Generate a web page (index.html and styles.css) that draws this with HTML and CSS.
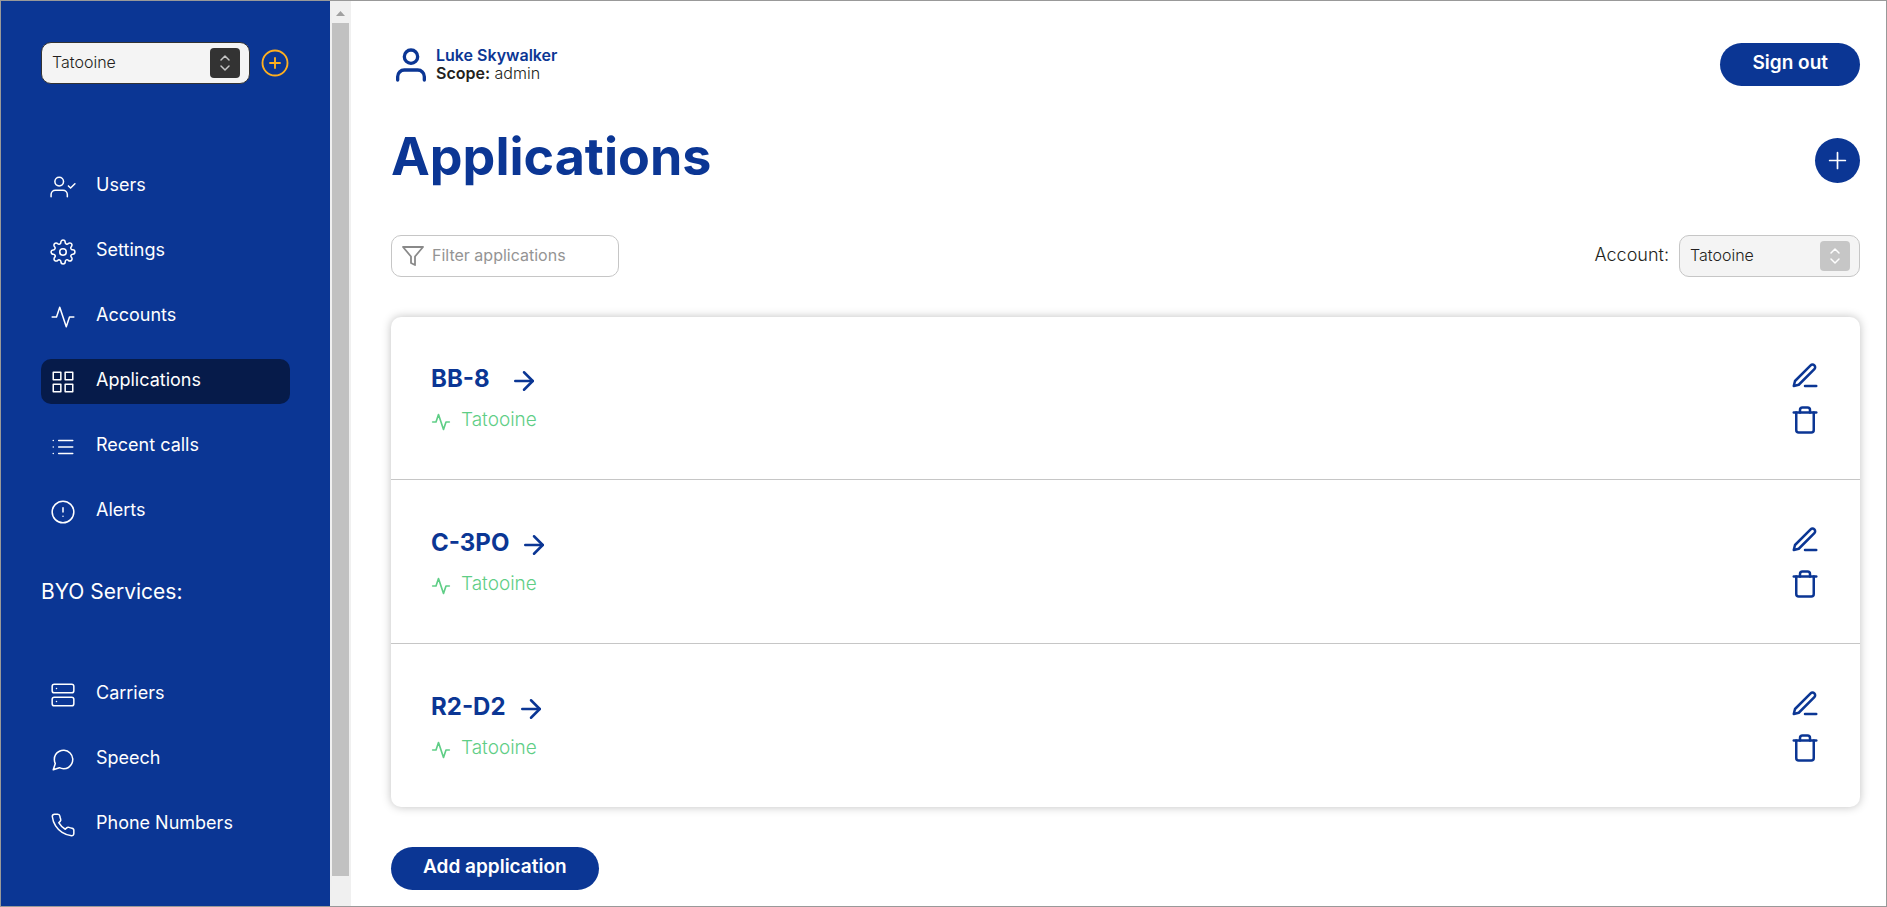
FILE: index.html
```html
<!DOCTYPE html>
<html lang="en">
<head>
<meta charset="utf-8">
<meta name="viewport" content="width=device-width, initial-scale=1">
<title>Applications</title>
<link rel="stylesheet" href="styles.css">
</head>
<body>
<svg class="sprite" aria-hidden="true">
  <symbol id="i-activity" viewBox="0 0 24 24"><polyline points="22 12 18 12 15 21 9 3 6 12 2 12"/></symbol>
  <symbol id="i-arrow" viewBox="0 0 24 24"><line x1="5" y1="12" x2="19" y2="12"/><polyline points="12 5 19 12 12 19"/></symbol>
  <symbol id="i-edit" viewBox="0 0 24 24"><path d="M12 20h9"/><path d="M16.500 3.500a2.121 2.121 0 0 1 3 3L7 19l-4 1 1-4L16.500 3.500z"/></symbol>
  <symbol id="i-trash" viewBox="0 0 24 24"><polyline points="3 6 5 6 21 6"/><path d="M19 6v14a2 2 0 0 1-2 2H7a2 2 0 0 1-2-2V6m3 0V4a2 2 0 0 1 2-2h4a2 2 0 0 1 2 2v2"/></symbol>
  <symbol id="i-updown" viewBox="0 0 30 30"><polyline points="11 12 15 8 19 12"/><polyline points="11 18 15 22 19 18"/></symbol>
</svg>
<div class="app">
  <aside class="sidebar">
    <div class="provider">
      <div class="select select-dark">
        <select aria-label="Service provider"><option>Tatooine</option></select>
        <span class="select-icon"><svg class="icon"><use href="#i-updown"/></svg></span>
      </div>
      <button class="provider-add" type="button" aria-label="Add service provider">
        <svg class="icon" viewBox="0 0 24 24"><circle cx="12" cy="12" r="10"/><line x1="12" y1="8" x2="12" y2="16"/><line x1="8" y1="12" x2="16" y2="12"/></svg>
      </button>
    </div>
    <nav class="nav">
      <a class="nav-link" href="#"><svg class="icon" viewBox="0 0 24 24"><path d="M16 21v-2a4 4 0 0 0-4-4H5a4 4 0 0 0-4 4v2"/><circle cx="8.500" cy="7" r="4"/><polyline points="17 11 19 13 23 9"/></svg><span>Users</span></a>
      <a class="nav-link" href="#"><svg class="icon" viewBox="0 0 24 24"><circle cx="12" cy="12" r="3"/><path d="M19.400 15a1.650 1.650 0 0 0 .33 1.820l.06.06a2 2 0 0 1 0 2.830 2 2 0 0 1-2.830 0l-.06-.06a1.650 1.650 0 0 0-1.820-.33 1.650 1.650 0 0 0-1 1.510V21a2 2 0 0 1-2 2 2 2 0 0 1-2-2v-.09A1.650 1.650 0 0 0 9 19.400a1.650 1.650 0 0 0-1.820.33l-.06.06a2 2 0 0 1-2.830 0 2 2 0 0 1 0-2.830l.06-.06a1.650 1.650 0 0 0 .33-1.820 1.650 1.650 0 0 0-1.510-1H3a2 2 0 0 1-2-2 2 2 0 0 1 2-2h.09A1.650 1.650 0 0 0 4.600 9a1.650 1.650 0 0 0-.33-1.820l-.06-.06a2 2 0 0 1 0-2.830 2 2 0 0 1 2.830 0l.06.06a1.650 1.650 0 0 0 1.820.33H9a1.650 1.650 0 0 0 1-1.510V3a2 2 0 0 1 2-2 2 2 0 0 1 2 2v.09a1.650 1.650 0 0 0 1 1.510 1.650 1.650 0 0 0 1.820-.33l.06-.06a2 2 0 0 1 2.830 0 2 2 0 0 1 0 2.830l-.06.06a1.650 1.650 0 0 0-.33 1.820V9a1.650 1.650 0 0 0 1.510 1H21a2 2 0 0 1 2 2 2 2 0 0 1-2 2h-.09a1.650 1.650 0 0 0-1.510 1z"/></svg><span>Settings</span></a>
      <a class="nav-link" href="#"><svg class="icon"><use href="#i-activity"/></svg><span>Accounts</span></a>
      <a class="nav-link active" href="#" aria-current="page"><svg class="icon" viewBox="0 0 24 24"><rect x="3" y="3" width="7" height="7"/><rect x="14" y="3" width="7" height="7"/><rect x="14" y="14" width="7" height="7"/><rect x="3" y="14" width="7" height="7"/></svg><span>Applications</span></a>
      <a class="nav-link" href="#"><svg class="icon" viewBox="0 0 24 24"><path d="M8 6h13M8 12h13M8 18h13M3 6h.01M3 12h.01M3 18h.01"/></svg><span>Recent calls</span></a>
      <a class="nav-link" href="#"><svg class="icon" viewBox="0 0 24 24"><circle cx="12" cy="12" r="10"/><path d="M12 8v4M12 16h.01"/></svg><span>Alerts</span></a>
    </nav>
    <h2 class="nav-title">BYO Services:</h2>
    <nav class="nav">
      <a class="nav-link" href="#"><svg class="icon" viewBox="0 0 24 24"><rect x="2" y="2" width="20" height="8" rx="2"/><rect x="2" y="14" width="20" height="8" rx="2"/><path d="M6 6h.01M6 18h.01"/></svg><span>Carriers</span></a>
      <a class="nav-link" href="#"><svg class="icon" viewBox="0 0 24 24"><path d="M21 11.500a8.380 8.380 0 0 1-.9 3.800 8.500 8.500 0 0 1-7.600 4.700 8.380 8.380 0 0 1-3.800-.9L3 21l1.900-5.700a8.380 8.380 0 0 1-.9-3.800 8.500 8.500 0 0 1 4.700-7.600 8.380 8.380 0 0 1 3.800-.9h.5a8.480 8.480 0 0 1 8 8v.5z"/></svg><span>Speech</span></a>
      <a class="nav-link" href="#"><svg class="icon" viewBox="0 0 24 24"><path d="M22 16.920v3a2 2 0 0 1-2.180 2 19.790 19.790 0 0 1-8.630-3.070 19.500 19.500 0 0 1-6-6 19.790 19.790 0 0 1-3.070-8.670A2 2 0 0 1 4.110 2h3a2 2 0 0 1 2 1.720 12.840 12.840 0 0 0 .7 2.810 2 2 0 0 1-.45 2.110L8.090 9.910a16 16 0 0 0 6 6l1.270-1.270a2 2 0 0 1 2.110-.45 12.840 12.840 0 0 0 2.810.7A2 2 0 0 1 22 16.920z"/></svg><span>Phone Numbers</span></a>
    </nav>
  </aside>
  <div class="scrollbar" aria-hidden="true">
    <svg class="scroll-up" viewBox="0 0 9 5"><path d="M0 5L4.500 0L9 5z"/></svg>
    <div class="scroll-thumb"></div>
  </div>
  <main class="main">
    <header class="topbar">
      <div class="user">
        <svg class="icon" viewBox="0 0 24 24"><path d="M20 21v-2a4 4 0 0 0-4-4H8a4 4 0 0 0-4 4v2"/><circle cx="12" cy="7" r="4"/></svg>
        <div class="user-text">
          <strong class="user-name">Luke Skywalker</strong>
          <span><strong>Scope:</strong> admin</span>
        </div>
      </div>
      <button class="button" type="button">Sign out</button>
    </header>
    <div class="heading">
      <h1>Applications</h1>
      <a class="round-add" href="#" aria-label="Add application"><svg class="icon" viewBox="0 0 24 24"><path d="M12 5v14M5 12h14"/></svg></a>
    </div>
    <div class="filters">
      <label class="search">
        <svg class="icon" viewBox="0 0 24 24"><polygon points="22 3 2 3 10 12.460 10 19 14 21 14 12.460 22 3"/></svg>
        <input type="text" placeholder="Filter applications" aria-label="Filter applications">
      </label>
      <div class="account">
        <label for="account">Account:</label>
        <div class="select">
          <select id="account"><option>Tatooine</option></select>
          <span class="select-icon"><svg class="icon"><use href="#i-updown"/></svg></span>
        </div>
      </div>
    </div>
    <section class="card">
      <article class="row">
        <div class="row-info">
          <a class="row-title" href="#"><span>BB-8</span><svg class="icon"><use href="#i-arrow"/></svg></a>
          <div class="row-account"><svg class="icon"><use href="#i-activity"/></svg><span>Tatooine</span></div>
        </div>
        <div class="row-actions">
          <a href="#" aria-label="Edit BB-8"><svg class="icon"><use href="#i-edit"/></svg></a>
          <button type="button" aria-label="Delete BB-8"><svg class="icon"><use href="#i-trash"/></svg></button>
        </div>
      </article>
      <article class="row">
        <div class="row-info">
          <a class="row-title" href="#"><span>C-3PO</span><svg class="icon"><use href="#i-arrow"/></svg></a>
          <div class="row-account"><svg class="icon"><use href="#i-activity"/></svg><span>Tatooine</span></div>
        </div>
        <div class="row-actions">
          <a href="#" aria-label="Edit C-3PO"><svg class="icon"><use href="#i-edit"/></svg></a>
          <button type="button" aria-label="Delete C-3PO"><svg class="icon"><use href="#i-trash"/></svg></button>
        </div>
      </article>
      <article class="row">
        <div class="row-info">
          <a class="row-title" href="#"><span>R2-D2</span><svg class="icon"><use href="#i-arrow"/></svg></a>
          <div class="row-account"><svg class="icon"><use href="#i-activity"/></svg><span>Tatooine</span></div>
        </div>
        <div class="row-actions">
          <a href="#" aria-label="Edit R2-D2"><svg class="icon"><use href="#i-edit"/></svg></a>
          <button type="button" aria-label="Delete R2-D2"><svg class="icon"><use href="#i-trash"/></svg></button>
        </div>
      </article>
    </section>
    <a class="button" href="#">Add application</a>
  </main>
</div>
</body>
</html>
```
FILE: styles.css
```css
* { box-sizing: border-box; }

body {
  margin: 0;
  background: #fff;
  color: #231f20;
  font-family: Inter, "Liberation Sans", sans-serif;
  font-size: 18px;
  line-height: 24px;
}

h1, h2 { margin: 0; }
a { color: inherit; text-decoration: none; }
button, select, input { font: inherit; color: inherit; }
button { padding: 0; border: 0; background: none; cursor: pointer; }

.sprite { position: absolute; width: 0; height: 0; }

.icon {
  display: block;
  flex: none;
  width: 30px;
  height: 30px;
  fill: none;
  stroke: currentColor;
  stroke-width: 2;
  stroke-linecap: round;
  stroke-linejoin: round;
}

.app {
  display: flex;
  min-height: 100vh;
  border: 1px solid #999;
}

/* Sidebar */
.sidebar {
  flex: none;
  width: 329px;
  padding: 41px 40px 0;
  background: #0b3694;
  color: #fff;
}

.provider {
  display: flex;
  align-items: center;
  gap: 10px;
  margin-bottom: 80px;
}
.provider .select { width: 209px; }
.provider-add { color: #ffaf1f; }
.provider-add .icon { stroke-width: 1.5; }

.nav {
  display: flex;
  flex-direction: column;
  gap: 20px;
}
.nav-link {
  display: flex;
  align-items: center;
  gap: 20px;
  height: 45px;
  padding: 0 9px;
  border-radius: 10px;
}
.nav-link.active { background: #061b4a; }
.nav-link .icon { width: 26px; height: 26px; stroke-width: 1.4; }
.nav-link span { padding-bottom: 3px; }
.nav-title {
  margin: 45px 0 67px;
  font-size: 21px;
  font-weight: 400;
  line-height: 26px;
}

/* Select */
.select { position: relative; }
.select select {
  display: block;
  width: 100%;
  height: 42px;
  padding: 0 48px 2px 10px;
  border: 1px solid #c6c6c6;
  border-radius: 10px;
  background: #f4f4f4;
  color: #231f20;
  font-size: 16px;
  font-weight: 300;
  appearance: none;
}
.select-icon {
  position: absolute;
  top: 6px;
  right: 10px;
  border-radius: 4px;
  background: #c6c6c6;
  color: #fff;
  pointer-events: none;
}
.select-icon .icon { stroke-width: 1.5; }
.select-dark select { border-color: #333; }
.select-dark .select-icon { background: #333; color: #c6c6c6; }

/* Scrollbar */
.scrollbar {
  display: flex;
  flex: none;
  flex-direction: column;
  align-items: center;
  width: 21px;
  padding: 10px 2px 30px;
  background: #f0f0f0;
}
.scroll-up { width: 9px; height: 5px; margin-bottom: 7px; fill: #a0a0a0; }
.scroll-thumb { flex: 1; width: 17px; background: #c1c1c1; }

/* Main */
.main {
  flex: 1;
  min-width: 0;
  padding: 42px 26px 16px 40px;
}

.topbar, .heading, .filters, .row {
  display: flex;
  align-items: center;
  justify-content: space-between;
}

.user { display: flex; align-items: center; gap: 5px; }
.user .icon { width: 40px; height: 40px; }
.user-text {
  display: flex;
  flex-direction: column;
  padding-bottom: 1px;
  font-size: 16px;
  font-weight: 300;
  line-height: 18px;
}
.user-text strong { font-weight: 600; }
.user .icon, .user-text .user-name { color: #0b3694; }

.button {
  display: inline-block;
  height: 43px;
  padding: 8px 32px 11px;
  border-radius: 22px;
  background: #0b3694;
  color: #fff;
  font-size: 19px;
  font-weight: 600;
  line-height: 24px;
}

.heading { margin-top: 44px; color: #0b3694; }
h1 {
  padding-bottom: 6px;
  font-size: 52px;
  font-weight: 700;
  line-height: 54px;
}
.round-add {
  padding: 9px;
  border-radius: 50%;
  background: #0b3694;
  color: #fff;
}
.round-add .icon { width: 27px; height: 27px; stroke-width: 1.5; }

.filters { margin: 45px 0 40px; }
.search {
  display: flex;
  align-items: center;
  gap: 7px;
  width: 228px;
  height: 42px;
  padding: 0 9px;
  border: 1px solid #c6c6c6;
  border-radius: 10px;
  color: #898989;
}
.search .icon { width: 24px; height: 24px; stroke-width: 1.8; }
.search input {
  width: 100%;
  min-width: 0;
  padding: 0 0 2px;
  border: 0;
  outline: 0;
  background: none;
  font-size: 16px;
}
.search input::placeholder { color: #949494; opacity: 1; }
.account { display: flex; align-items: center; gap: 10px; font-weight: 300; }
.account label { padding-bottom: 2px; }
.account .select { width: 181px; }

.card {
  margin-bottom: 40px;
  border-radius: 10px;
  box-shadow: 0 0 10px rgba(0, 0, 0, 0.25);
}
.row { align-items: flex-end; padding: 44px 40px; }
.row + .row { padding-top: 45px; border-top: 1px solid #c6c6c6; }
.row-title {
  display: flex;
  align-items: center;
  gap: 10px;
  color: #0b3694;
  font-size: 24px;
  font-weight: 700;
  line-height: 30px;
}
.row-title span { min-width: 68px; padding-bottom: 4px; }
.row-title .icon { stroke-width: 2; }
.row-account {
  display: flex;
  align-items: center;
  gap: 10px;
  margin-top: 10px;
  color: #5fce86;
  font-size: 19px;
  font-weight: 300;
}
.row-account .icon { width: 20px; height: 20px; }
.row-account span { padding-bottom: 3px; }
.row-actions {
  display: flex;
  flex-direction: column;
  gap: 14px;
  color: #0b3694;
}
```
